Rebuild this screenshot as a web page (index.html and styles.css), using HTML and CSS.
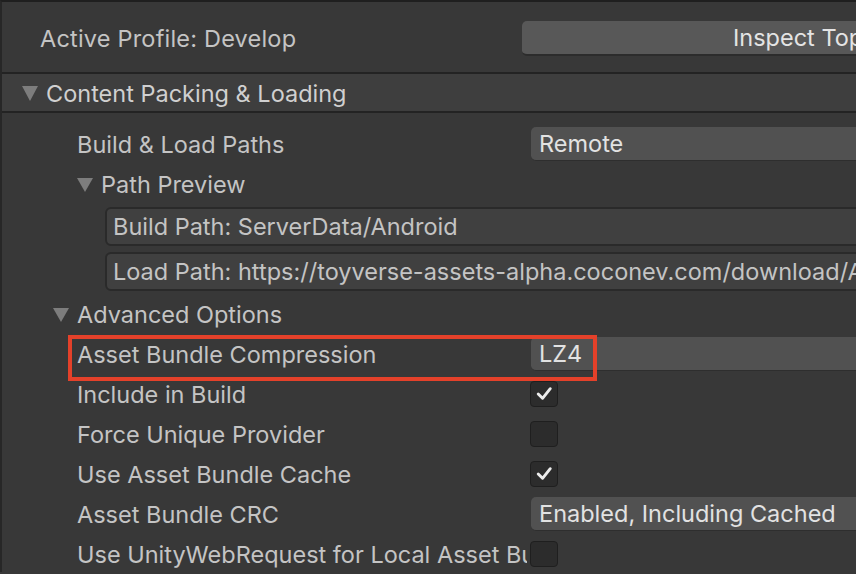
FILE: index.html
```html
<!DOCTYPE html>
<html>
<head>
<meta charset="utf-8">
<link rel="stylesheet" href="styles.css">
</head>
<body>
<div class="panel">
  <div class="profile-bar">
    <div class="profile-label">Active Profile: Develop</div>
    <div class="inspect-btn">Inspect Top Settings</div>
  </div>
  <div class="foldout-header">
    <span class="tri"></span>
    <span class="header-text">Content Packing &amp; Loading</span>
  </div>
  <div class="section">
    <div class="row">
      <div class="label indent1">Build &amp; Load Paths</div>
      <div class="value"><div class="dropdown">Remote</div></div>
    </div>
    <div class="row">
      <div class="label indent1 fold"><span class="tri small"></span><span>Path Preview</span></div>
      <div class="value"></div>
    </div>
    <div class="path-row"><div class="path-box">Build Path: ServerData/Android</div></div>
    <div class="path-row"><div class="path-box">Load Path: https://toyverse-assets-alpha.coconev.com/download/Android</div></div>
    <div class="row">
      <div class="label indent0 fold"><span class="tri small"></span><span>Advanced Options</span></div>
      <div class="value"></div>
    </div>
    <div class="row highlighted">
      <div class="label indent1">Asset Bundle Compression</div>
      <div class="value"><div class="dropdown">LZ4</div></div>
      <div class="red-box"></div>
    </div>
    <div class="row">
      <div class="label indent1">Include in Build</div>
      <div class="value"><div class="checkbox"><svg viewBox="0 0 27 26" width="27" height="26"><polyline points="7.5,13 12,17.5 20,7.5" fill="none" stroke="#ececec" stroke-width="3" stroke-linecap="round" stroke-linejoin="round"/></svg></div></div>
    </div>
    <div class="row">
      <div class="label indent1">Force Unique Provider</div>
      <div class="value"><div class="checkbox"></div></div>
    </div>
    <div class="row">
      <div class="label indent1">Use Asset Bundle Cache</div>
      <div class="value"><div class="checkbox"><svg viewBox="0 0 27 26" width="27" height="26"><polyline points="7.5,13 12,17.5 20,7.5" fill="none" stroke="#ececec" stroke-width="3" stroke-linecap="round" stroke-linejoin="round"/></svg></div></div>
    </div>
    <div class="row">
      <div class="label indent1">Asset Bundle CRC</div>
      <div class="value"><div class="dropdown">Enabled, Including Cached</div></div>
    </div>
    <div class="row">
      <div class="label indent1">Use UnityWebRequest for Local Asset Bundles</div>
      <div class="value"><div class="checkbox"></div></div>
    </div>
  </div>
</div>
</body>
</html>
```

FILE: styles.css
```css
html, body {
  margin: 0;
  padding: 0;
}
body {
  width: 856px;
  height: 574px;
  overflow: hidden;
  background: #383838;
  font-family: Inter, "Noto Sans", sans-serif;
  font-size: 23.5px;
  line-height: 28px;
  color: #c4c4c4;
}
.panel {
  border-top: 2px solid #1f1f1f;
  border-left: 2px solid #272727;
  height: 572px;
  box-sizing: border-box;
  overflow: hidden;
}
.profile-bar {
  display: grid;
  grid-template-columns: 520px 1fr;
  align-items: center;
  height: 70px;
  border-bottom: 2px solid #232323;
}
.profile-label {
  padding-left: 38px;
  padding-top: 3px;
  white-space: nowrap;
  letter-spacing: 0.2px;
}
.inspect-btn {
  height: 35px;
  margin-top: 3px;
  margin-right: -60px;
  background: #585858;
  border-radius: 5px;
  border-bottom: 2px solid #2c2c2c;
  box-sizing: border-box;
  padding-left: 211px;
  padding-top: 1px;
  display: flex;
  align-items: center;
  color: #e4e4e4;
  white-space: nowrap;
}
.foldout-header {
  display: flex;
  align-items: center;
  gap: 8px;
  height: 37px;
  background: #3e3e3e;
  border-bottom: 2px solid #232323;
  padding-left: 20px;
  color: #d0d0d0;
}
.header-text {
  padding-top: 3px;
}
.tri {
  width: 0;
  height: 0;
  border-left: 8.5px solid transparent;
  border-right: 8.5px solid transparent;
  border-top: 15px solid #7d7d7d;
  flex: none;
  margin-top: 2px;
}
.tri.small {
  border-left-width: 8px;
  border-right-width: 8px;
  border-top-width: 14px;
  margin-top: 0;
}
.section {
  padding-top: 11px;
}
.row {
  position: relative;
  display: grid;
  grid-template-columns: 525px 1fr;
  align-items: center;
  height: 40px;
}
.label {
  overflow: hidden;
  white-space: nowrap;
  padding-top: 1px;
}
.indent1 {
  padding-left: 75px;
}
.indent0 {
  padding-left: 51px;
}
.fold {
  display: flex;
  align-items: center;
  gap: 8px;
}
.value {
  display: flex;
  align-items: center;
  min-width: 0;
}
.dropdown {
  flex: 1;
  height: 34px;
  margin-left: 4px;
  margin-right: -30px;
  background: #515151;
  border-radius: 5px;
  border-bottom: 1px solid #2e2e2e;
  box-sizing: border-box;
  padding-left: 8px;
  padding-top: 1px;
  display: flex;
  align-items: center;
  color: #e2e2e2;
  white-space: nowrap;
}
.checkbox {
  width: 28px;
  height: 26px;
  margin-left: 3px;
  background: #2c2c2c;
  border: 1px solid #1f1f1f;
  border-radius: 4px;
  box-sizing: border-box;
  display: flex;
  align-items: center;
  justify-content: center;
}
.checkbox svg {
  display: block;
}
.path-row {
  height: 45px;
  display: flex;
  align-items: center;
}
.path-box {
  height: 39px;
  margin-left: 103px;
  margin-right: -40px;
  flex: 1;
  background: #404040;
  border: 2px solid #2a2a2a;
  border-radius: 6px;
  box-sizing: border-box;
  padding-left: 6px;
  padding-top: 1px;
  display: flex;
  align-items: center;
  white-space: nowrap;
  overflow: hidden;
}
.red-box {
  position: absolute;
  left: 66px;
  top: 1px;
  width: 529px;
  height: 46px;
  border: 4px solid #e4412a;
  box-sizing: border-box;
  pointer-events: none;
}
```
